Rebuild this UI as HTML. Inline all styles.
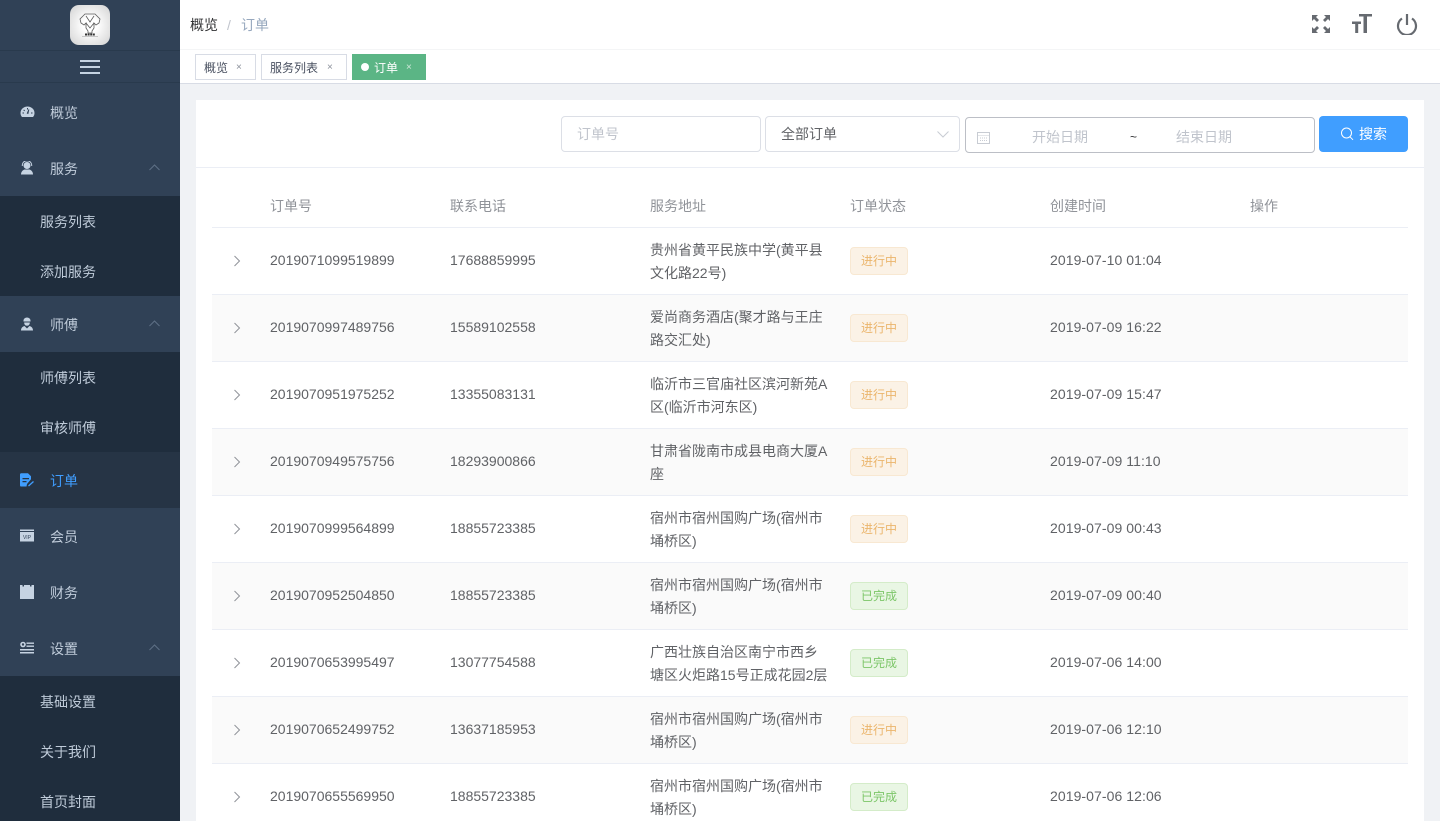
<!DOCTYPE html>
<html lang="zh"><head><meta charset="utf-8"><title>订单</title>
<style>
*{box-sizing:border-box}
html,body{margin:0;padding:0;width:1440px;height:821px;overflow:hidden;background:#f0f2f5}
body{font-family:"Helvetica Neue",Helvetica,"Liberation Sans","Noto Sans CJK SC",sans-serif;font-size:14px;color:#606266;position:relative}
.a{position:absolute}
#side{left:0;top:0;width:180px;height:821px;background:#304156;overflow:hidden}
.mi{position:absolute;left:0;width:180px;height:56px;line-height:58px;color:#bfcbd9;padding-left:50px;font-size:14px}
.mi svg.ic{position:absolute;left:20px;top:21px}
.mi svg.ar{position:absolute;left:149px;top:24px}
.sub{position:absolute;left:0;width:180px;background:#1f2d3d}
.sub div{height:50px;line-height:52px;padding-left:40px;color:#bfcbd9;font-size:14px}
#hd{left:180px;top:0;width:1260px;height:50px;background:#fff;border-bottom:1px solid #f4f5f6}
#tabs{left:180px;top:50px;width:1260px;height:34px;background:#fff;border-bottom:1px solid #d8dce5}
.tag{position:absolute;top:4px;height:26px;line-height:26px;border:1px solid #d8dce5;background:#fff;color:#495060;font-size:12px;padding-left:8px}
.tag i{position:absolute;font-style:normal;font-size:10px;color:#8a8f99;top:0}
#card{left:196px;top:100px;width:1228px;height:721px;background:#fff}
.row{position:absolute;left:212px;width:1196px;height:67px;border-bottom:1px solid #ebeef5;background:#fff}
.row.z{background:#fafafa}
.row span{position:absolute;line-height:23px;font-size:14px;color:#606266}
.row .c1{left:58px;top:21px}
.row .c2{left:238px;top:21px}
.row .c3{left:438px;top:11px;width:180px}
.row .c5{left:838px;top:21px;letter-spacing:.07px}
.row svg{position:absolute;left:21px;top:27px}
.row b{position:absolute;left:638px;top:19px;width:58px;height:28px;line-height:27px;border-radius:4px;text-align:center;font-weight:normal;font-size:12px}
.o{background:#fbf2e6;border:1px solid #f8e8d2;color:#ebb56c}
.g{background:#e9f6e4;border:1px solid #d4ecc9;color:#7cc668}
.th{position:absolute;top:195px;line-height:23px;color:#909399;font-size:14px;font-weight:normal}
.inp{position:absolute;background:#fff;border:1px solid #dcdfe6;border-radius:4px;line-height:34px;color:#c0c4cc}
</style></head><body>

<div id="side" class="a">
  <div class="a" style="left:0;top:50px;width:180px;height:1px;background:#293a4d"></div>
  <div class="a" style="left:0;top:82px;width:180px;height:1px;background:#293a4d"></div>
  <div class="a" style="left:70px;top:5px;width:40px;height:40px;border-radius:9px;background:radial-gradient(circle,#fff 25%,#d2d2d2 100%)">
    <svg width="40" height="40" viewBox="0 0 40 40" fill="none" stroke="#5c5c5c" stroke-width=".8"><path d="M15 9h10l2 2 3 3-1 4-3 2-2-2v5l-2 3v2h-4v-2l-2-3v-5l-2 2-3-2-1-4 3-3zM16 11l4 6 4-6M16 18l4 5 4-5"/><path d="M15 29.500h10" stroke="#333" stroke-width="2" stroke-dasharray="2 .6"/><path d="M12 31.500h16" stroke="#999" stroke-width=".5"/></svg>
  </div>
  <div class="a" style="left:80px;top:60px;width:20px;height:2px;background:#c5d3e2"></div>
  <div class="a" style="left:80px;top:66px;width:20px;height:2px;background:#c5d3e2"></div>
  <div class="a" style="left:80px;top:72px;width:20px;height:2px;background:#c5d3e2"></div>

  <div class="mi" style="top:84px">概览<svg class="ic" width="15" height="14" viewBox="0 0 14 14"><path fill="#c6d3e2" fill-rule="evenodd" d="M7 1.500a7 6.500 0 0 1 7 6.500c0 1.600-.5 3-1.500 4h-11C.5 11 0 9.600 0 8a7 6.500 0 0 1 7-6.500zM6.200 8.500l1.600.5 1-4.500-.8-.2zM2 7.500v1h1.500v-1zM10.500 7.500v1H12v-1zM3.500 4.500l-.7.700 1 1 .7-.7zM6.500 3v1.500h1V3z"/></svg></div>
  <div class="mi" style="top:140px">服务<svg class="ic" width="14" height="14" viewBox="0 0 14 14"><circle cx="7" cy="4.500" r="3.500" fill="#c6d3e2"/><path d="M2.300 5V4a4.700 4.200 0 0 1 9.400 0v1" fill="none" stroke="#c6d3e2"/><path fill="#c6d3e2" d="M1 13.500c0-3 2-4.500 3.500-5h5c1.500.5 3.500 2 3.500 5z"/></svg><svg class="ar" width="11" height="7" viewBox="0 0 11 7" fill="none" stroke="#5f7186"><path d="M.5 6L5.500 1l5 5"/></svg></div>
  <div class="sub" style="top:196px;height:100px"><div>服务列表</div><div>添加服务</div></div>
  <div class="mi" style="top:296px">师傅<svg class="ic" width="14" height="14" viewBox="0 0 14 14"><path fill="#c6d3e2" d="M3.500 3.500a3.500 3 0 0 1 7 0v1h-7zM4.200 5.500h5.600c0 2-1 3.200-2.800 3.200S4.200 7.500 4.200 5.500zM1 13.500c0-2.500 1.500-4 3.500-4.500L7 11.500 9.500 9c2 .5 3.500 2 3.500 4.500z"/></svg><svg class="ar" width="11" height="7" viewBox="0 0 11 7" fill="none" stroke="#5f7186"><path d="M.5 6L5.500 1l5 5"/></svg></div>
  <div class="sub" style="top:352px;height:100px"><div>师傅列表</div><div>审核师傅</div></div>
  <div class="mi" style="top:452px;background:#263445;color:#409eff">订单<svg class="ic" width="14" height="14" viewBox="0 0 14 14"><path fill="#409eff" fill-rule="evenodd" d="M0 1.500C0 .7.500.2 1.200.2H8l3 3v3L7 11l-.5 2.500H1.200C.5 13.500 0 13 0 12.200zM2.500 5v1.300h6.500V5zM2.500 8v1.300h4V8z"/><path d="M8.500 13l5-4.500" stroke="#409eff" stroke-width="1.300"/></svg></div>
  <div class="mi" style="top:508px">会员<svg class="ic" width="14" height="14" viewBox="0 0 14 14"><path fill="#c6d3e2" d="M0 .5h14v1.500H0zM0 3h14v9.500H0z"/><text x="7" y="10" font-size="5" text-anchor="middle" fill="#304156" font-family="Liberation Sans">VIP</text></svg></div>
  <div class="mi" style="top:564px">财务<svg class="ic" width="14" height="14" viewBox="0 0 14 14"><path fill="#c6d3e2" d="M0 0h2.500v1.500h1.500V0h6v1.500h1.500V0H14v14H0z"/></svg></div>
  <div class="mi" style="top:620px">设置<svg class="ic" width="14" height="14" viewBox="0 0 14 14" fill="#c6d3e2"><circle cx="3" cy="3.500" r="2" fill="none" stroke="#c6d3e2" stroke-width="1.600"/><path d="M6.500 1.500H14v1.400H6.500zM6.500 4.500H14v1.400H6.500zM0 8h14v1.500H0zM0 11h14v1.500H0z"/></svg><svg class="ar" width="11" height="7" viewBox="0 0 11 7" fill="none" stroke="#5f7186"><path d="M.5 6L5.500 1l5 5"/></svg></div>
  <div class="sub" style="top:676px;height:145px"><div>基础设置</div><div>关于我们</div><div>首页封面</div></div>
</div>

<div id="hd" class="a">
  <span class="a" style="left:10px;top:14px;line-height:22px;color:#303133">概览</span>
  <span class="a" style="left:47px;top:14px;line-height:22px;color:#c0c4cc">/</span>
  <span class="a" style="left:61px;top:14px;line-height:22px;color:#97a8be">订单</span>
  <svg class="a" style="left:1131px;top:14px" width="20" height="20" viewBox="0 0 20 20" fill="#666a70"><path d="M1 1h6L5 3l3 3-2 2-3-3-2 2zM19 1v6l-2-2-3 3-2-2 3-3-2-2zM1 19v-6l2 2 3-3 2 2-3 3 2 2zM19 19h-6l2-2-3-3 2-2 3 3 2-2z"/></svg>
  <svg class="a" style="left:1171px;top:14px" width="22" height="20" viewBox="0 0 22 20" fill="#666a70"><path d="M8 0h13v2.500h-5V19h-3.500V2.500H8zM1 7.500h9V10H7.200v9H4.200v-9H1z"/></svg>
  <svg class="a" style="left:1216px;top:13px" width="22" height="22" viewBox="0 0 22 22" fill="none" stroke="#666a70" stroke-width="2.200"><path d="M6 5.500a9 9 0 1 0 10 0"/><path d="M11 1v11"/></svg>
</div>

<div id="tabs" class="a">
  <div class="tag" style="left:15px;width:61px">概览<i style="left:40px">×</i></div>
  <div class="tag" style="left:81px;width:86px">服务列表<i style="left:65px">×</i></div>
  <div class="tag" style="left:172px;width:74px;background:#5bb585;border-color:#5bb585;color:#fff;padding-left:21px"><span class="a" style="left:8px;top:8px;width:8px;height:8px;border-radius:50%;background:#fff"></span>订单<i style="left:53px;color:#cfe9da">×</i></div>
</div>

<div id="card" class="a"></div>
<div class="a" style="left:196px;top:167px;width:1228px;height:1px;background:#ebeef5"></div>

<div class="inp" style="left:561px;top:116px;width:200px;height:36px;padding-left:15px">订单号</div>
<div class="inp" style="left:765px;top:116px;width:195px;height:36px;padding-left:15px;color:#606266">全部订单
  <svg class="a" style="left:171px;top:14px" width="12" height="7" viewBox="0 0 12 7" fill="none" stroke="#c8ccd3"><path d="M.5 .5l5.500 5.500L11.500 .5"/></svg></div>
<div class="inp" style="left:965px;top:117px;width:350px;height:36px;border-color:#bcbfc6;line-height:36px">
  <svg class="a" style="left:11px;top:13px" width="13" height="13" viewBox="0 0 13 13" fill="none" stroke="#c8ccd3"><rect x=".5" y="1.500" width="12" height="11"/><path d="M.5 4.500h12M3 7h7M3 9.500h7" stroke-dasharray="1 1"/></svg>
  <span class="a" style="left:66px;top:1px">开始日期</span>
  <span class="a" style="left:164px;top:1px;color:#303133;font-size:12px">~</span>
  <span class="a" style="left:210px;top:1px">结束日期</span>
</div>
<div class="a" style="left:1319px;top:116px;width:89px;height:36px;background:#409eff;border-radius:4px;color:#fff;line-height:36px;padding-left:40px">搜索
  <svg class="a" style="left:21px;top:11px" width="14" height="14" viewBox="0 0 14 14" fill="none" stroke="#fff"><circle cx="6.500" cy="6" r="5"/><path d="M10 9.800l3 3"/></svg></div>

<div class="th" style="left:270px">订单号</div>
<div class="th" style="left:450px">联系电话</div>
<div class="th" style="left:650px">服务地址</div>
<div class="th" style="left:850px">订单状态</div>
<div class="th" style="left:1050px">创建时间</div>
<div class="th" style="left:1250px">操作</div>
<div class="a" style="left:212px;top:227px;width:1196px;height:1px;background:#ebeef5"></div>

<div class="row" style="top:228px"><svg width="8" height="12" viewBox="0 0 8 12" fill="none" stroke="#909399"><path d="M1.500 1l5 5-5 5"/></svg><span class="c1">2019071099519899</span><span class="c2">17688859995</span><span class="c3">贵州省黄平民族中学(黄平县文化路22号)</span><b class="o">进行中</b><span class="c5">2019-07-10 01:04</span></div>
<div class="row z" style="top:295px"><svg width="8" height="12" viewBox="0 0 8 12" fill="none" stroke="#909399"><path d="M1.500 1l5 5-5 5"/></svg><span class="c1">2019070997489756</span><span class="c2">15589102558</span><span class="c3">爱尚商务酒店(聚才路与王庄路交汇处)</span><b class="o">进行中</b><span class="c5">2019-07-09 16:22</span></div>
<div class="row" style="top:362px"><svg width="8" height="12" viewBox="0 0 8 12" fill="none" stroke="#909399"><path d="M1.500 1l5 5-5 5"/></svg><span class="c1">2019070951975252</span><span class="c2">13355083131</span><span class="c3">临沂市三官庙社区滨河新苑A区(临沂市河东区)</span><b class="o">进行中</b><span class="c5">2019-07-09 15:47</span></div>
<div class="row z" style="top:429px"><svg width="8" height="12" viewBox="0 0 8 12" fill="none" stroke="#909399"><path d="M1.500 1l5 5-5 5"/></svg><span class="c1">2019070949575756</span><span class="c2">18293900866</span><span class="c3">甘肃省陇南市成县电商大厦A座</span><b class="o">进行中</b><span class="c5">2019-07-09 11:10</span></div>
<div class="row" style="top:496px"><svg width="8" height="12" viewBox="0 0 8 12" fill="none" stroke="#909399"><path d="M1.500 1l5 5-5 5"/></svg><span class="c1">2019070999564899</span><span class="c2">18855723385</span><span class="c3">宿州市宿州国购广场(宿州市埇桥区)</span><b class="o">进行中</b><span class="c5">2019-07-09 00:43</span></div>
<div class="row z" style="top:563px"><svg width="8" height="12" viewBox="0 0 8 12" fill="none" stroke="#909399"><path d="M1.500 1l5 5-5 5"/></svg><span class="c1">2019070952504850</span><span class="c2">18855723385</span><span class="c3">宿州市宿州国购广场(宿州市埇桥区)</span><b class="g">已完成</b><span class="c5">2019-07-09 00:40</span></div>
<div class="row" style="top:630px"><svg width="8" height="12" viewBox="0 0 8 12" fill="none" stroke="#909399"><path d="M1.500 1l5 5-5 5"/></svg><span class="c1">2019070653995497</span><span class="c2">13077754588</span><span class="c3">广西壮族自治区南宁市西乡塘区火炬路15号正成花园2层</span><b class="g">已完成</b><span class="c5">2019-07-06 14:00</span></div>
<div class="row z" style="top:697px"><svg width="8" height="12" viewBox="0 0 8 12" fill="none" stroke="#909399"><path d="M1.500 1l5 5-5 5"/></svg><span class="c1">2019070652499752</span><span class="c2">13637185953</span><span class="c3">宿州市宿州国购广场(宿州市埇桥区)</span><b class="o">进行中</b><span class="c5">2019-07-06 12:10</span></div>
<div class="row" style="top:764px"><svg width="8" height="12" viewBox="0 0 8 12" fill="none" stroke="#909399"><path d="M1.500 1l5 5-5 5"/></svg><span class="c1">2019070655569950</span><span class="c2">18855723385</span><span class="c3">宿州市宿州国购广场(宿州市埇桥区)</span><b class="g">已完成</b><span class="c5">2019-07-06 12:06</span></div>

</body></html>
